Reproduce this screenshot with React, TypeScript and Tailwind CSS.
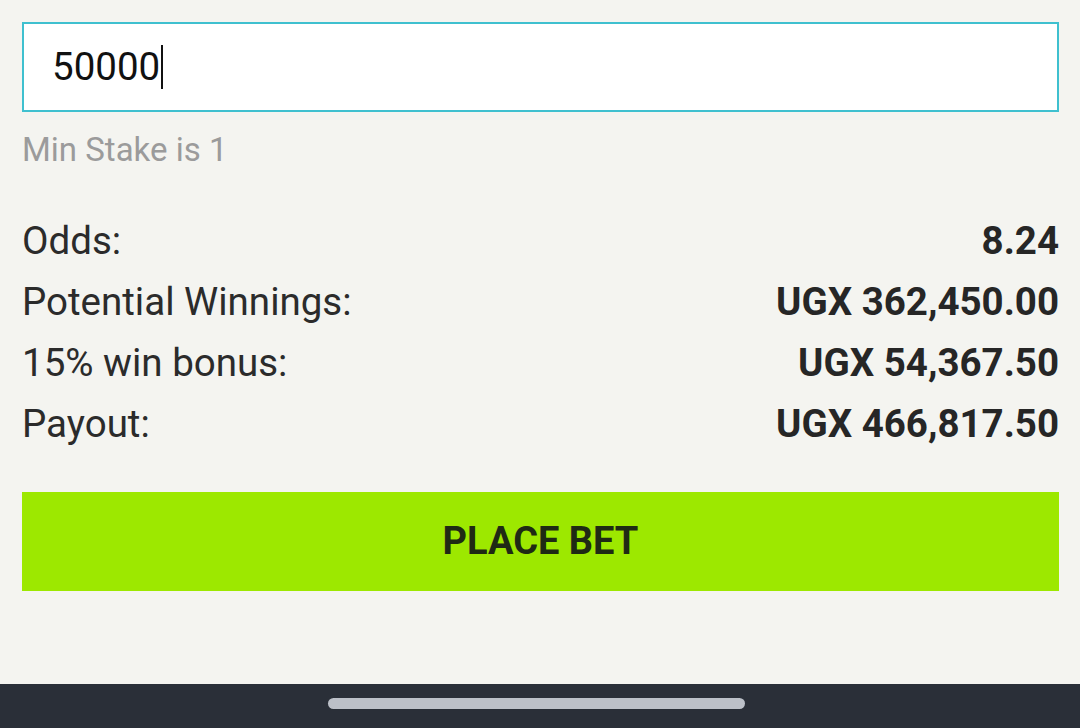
import React from "react";

export default function App() {
  const rows: [string, string][] = [
    ["Odds:", "8.24"],
    ["Potential Winnings:", "UGX 362,450.00"],
    ["15% win bonus:", "UGX 54,367.50"],
    ["Payout:", "UGX 466,817.50"],
  ];
  return (
    <div
      className="w-[1080px] h-[728px] bg-[#f4f4f0] flex flex-col overflow-hidden"
      style={{ fontFamily: "Roboto, 'Noto Sans', sans-serif" }}
    >
      <div className="flex-1 pl-[22px] pr-[21px] pt-[22px] flex flex-col">
        <div className="h-[90px] bg-white border-2 border-[#3fc0cf] flex items-center pl-[28px]">
          <span className="text-[38.5px] text-[#111] leading-none">50000</span>
          <span className="w-[2px] h-[44px] bg-[#111] ml-[1px]"></span>
        </div>
        <div className="mt-[20px] text-[33px] text-[#9b9b9b] leading-[36px]">Min Stake is 1</div>
        <div className="mt-[43px] flex flex-col">
          {rows.map(([l, v]) => (
            <div key={l} className="flex justify-between items-center h-[61px] text-[38.5px] leading-none">
              <span className="text-[#2b2b2b]">{l}</span>
              <span className="text-[#262626] font-bold">{v}</span>
            </div>
          ))}
        </div>
        <button className="mt-[37px] h-[99px] w-full bg-[#9de800] flex items-center justify-center text-[38px] font-bold text-[#1f2a14]">
          PLACE BET
        </button>
      </div>
      <div className="h-[44px] bg-[#2a2f38] flex pl-[328px] pt-[14px]">
        <div className="w-[417px] h-[11px] rounded-full bg-[#bcc0c8]"></div>
      </div>
    </div>
  );
}
